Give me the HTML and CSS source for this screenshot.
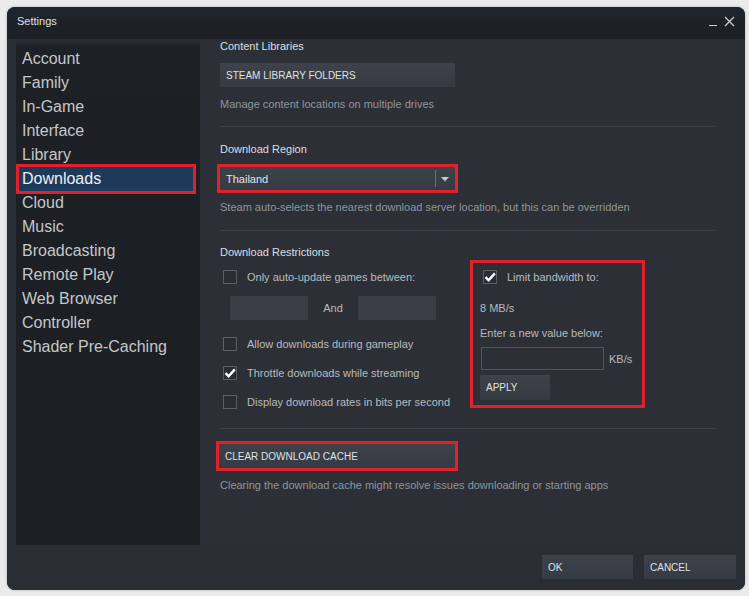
FILE: index.html
```html
<!DOCTYPE html>
<html>
<head>
<meta charset="utf-8">
<link rel="stylesheet" href="styles.css">
</head>
<body>
<div class="window">
  <div class="titlebar">
    <span class="title">Settings</span>
    <div class="controls">
      <span class="min"></span>
      <svg class="close" width="11" height="11" viewBox="0 0 11 11"><path d="M1 1L10 10M10 1L1 10" stroke="#c9ccd0" stroke-width="1.3"/></svg>
    </div>
  </div>
  <div class="main">
    <nav class="sidebar">
      <div class="item">Account</div>
      <div class="item">Family</div>
      <div class="item">In-Game</div>
      <div class="item">Interface</div>
      <div class="item">Library</div>
      <div class="item active">Downloads</div>
      <div class="item">Cloud</div>
      <div class="item">Music</div>
      <div class="item">Broadcasting</div>
      <div class="item">Remote Play</div>
      <div class="item">Web Browser</div>
      <div class="item">Controller</div>
      <div class="item">Shader Pre-Caching</div>
    </nav>
    <section class="content">
      <div class="heading">Content Libraries</div>
      <div class="btn wide mt10">STEAM LIBRARY FOLDERS</div>
      <div class="desc mt10">Manage content locations on multiple drives</div>
      <div class="sep sep1"></div>

      <div class="heading">Download Region</div>
      <div class="dropdown">
        <span class="dd-text">Thailand</span>
        <span class="dd-div"></span>
        <svg class="dd-arrow" width="8" height="5" viewBox="0 0 8 5"><path d="M0 0H8L4 4.5Z" fill="#c3c6ca"/></svg>
      </div>
      <div class="desc mt10">Steam auto-selects the nearest download server location, but this can be overridden</div>
      <div class="sep sep2"></div>

      <div class="heading h3">Download Restrictions</div>
      <div class="restrict">
        <div class="left">
          <div class="check-row r1"><span class="cb"></span><span class="label">Only auto-update games between:</span></div>
          <div class="times">
            <span class="tbox"></span>
            <span class="and">And</span>
            <span class="tbox"></span>
          </div>
          <div class="check-row r2"><span class="cb"></span><span class="label">Allow downloads during gameplay</span></div>
          <div class="check-row r3"><span class="cb"><svg width="14" height="14" viewBox="0 0 14 14"><path d="M2.5 7.2L5.6 10.2L11.8 3.4" fill="none" stroke="#fff" stroke-width="2.4"/></svg></span><span class="label">Throttle downloads while streaming</span></div>
          <div class="check-row r3"><span class="cb"></span><span class="label">Display download rates in bits per second</span></div>
        </div>
        <div class="bandwidth">
          <div class="check-row bw1"><span class="cb"><svg width="14" height="14" viewBox="0 0 14 14"><path d="M2.5 7.2L5.6 10.2L11.8 3.4" fill="none" stroke="#fff" stroke-width="2.4"/></svg></span><span class="label">Limit bandwidth to:</span></div>
          <div class="plain bw2">8 MB/s</div>
          <div class="plain bw3">Enter a new value below:</div>
          <div class="kb-row">
            <span class="kb-input"></span>
            <span class="plain">KB/s</span>
          </div>
          <div class="btn apply">APPLY</div>
        </div>
      </div>
      <div class="sep sep3"></div>
      <div class="btn wide clear">CLEAR DOWNLOAD CACHE</div>
      <div class="desc mt10">Clearing the download cache might resolve issues downloading or starting apps</div>
    </section>
  </div>
  <div class="footer">
    <div class="btn fbtn">OK</div>
    <div class="btn fbtn cancel">CANCEL</div>
  </div>
</div>
</body>
</html>
```

FILE: styles.css
```css
* { box-sizing: border-box; }
html, body { margin: 0; padding: 0; }
body {
  background: #ebebeb;
  width: 749px;
  height: 596px;
  overflow: hidden;
  font-family: "Liberation Sans", Arial, sans-serif;
  padding: 7px 0 0 7px;
}
.window {
  width: 738px;
  height: 583px;
  background: #2a2d33;
  border-radius: 8px;
  overflow: hidden;
  display: flex;
  flex-direction: column;
  box-shadow: 0 0 3px rgba(0,0,0,0.25);
}
.titlebar {
  height: 32px;
  flex: none;
  background: linear-gradient(#20252c, #1c1f24);
  display: flex;
  align-items: center;
  justify-content: space-between;
  padding: 0 10px 0 10px;
}
.title {
  color: #dfe2e5;
  font-size: 11px;
  margin-top: -4px;
}
.controls {
  display: flex;
  align-items: center;
  gap: 7px;
  margin-top: -4px;
}
.min {
  width: 8px;
  height: 1px;
  background: #c9ccd0;
  margin-top: 9px;
}
.main {
  height: 506px;
  flex: none;
  display: flex;
  padding-left: 9px;
}
.sidebar {
  width: 184px;
  flex: none;
  background: linear-gradient(#2c3037 0px, #1d2024 8px, #1c1e22 100%);
  padding-top: 8px;
}
.item {
  height: 24px;
  line-height: 24px;
  font-size: 16px;
  color: #c4c7cb;
  padding-left: 6px;
  width: 177px;
}
.item.active {
  position: relative;
  background: #1d3a5a;
  color: #eef1f4;
}
.item.active::after {
  content: "";
  position: absolute;
  left: 0;
  top: -3px;
  right: -3px;
  bottom: -3px;
  border: 3px solid #e0202b;
}
.content {
  width: 537px;
  flex: none;
  background: #2c2f36;
  padding: 0 22px 0 20px;
}
.heading {
  font-size: 11px;
  line-height: 14px;
  color: #dcdfe2;
}
.mt10 { margin-top: 10px; }
.desc {
  font-size: 11px;
  line-height: 14px;
  color: #8e959c;
  white-space: nowrap;
}
.sep {
  height: 1px;
  background: #3c4048;
}
.sep1 { margin: 15px 0 15px; }
.sep2 { margin: 16px 0 14px; }
.sep3 { margin: 19px 0 15px; }
.btn {
  background: linear-gradient(#3d424b, #363a42);
  color: #dfe2e5;
  font-size: 10px;
  padding-left: 6px;
  display: flex;
  align-items: center;
}
.wide {
  width: 235px;
  height: 24px;
}
.dropdown {
  margin-top: 11px;
  width: 235px;
  height: 23px;
  background: linear-gradient(#3d424b, #363a42);
  outline: 3px solid #e0202b;
  display: flex;
  align-items: center;
  padding-left: 6px;
}
.dd-text {
  flex: 1;
  font-size: 11px;
  color: #e3e6e9;
}
.dd-div {
  width: 1px;
  height: 17px;
  background: #6b7078;
}
.dd-arrow {
  margin: 1px 6px 0 5px;
}
.restrict {
  display: flex;
  margin-top: 1px;
}
.left {
  width: 250px;
  padding-top: 10px;
}
.check-row {
  display: flex;
  align-items: center;
  height: 14px;
}
.cb {
  width: 14px;
  height: 14px;
  border: 1px solid #5a5e65;
  background: #2a2d33;
  margin-left: 3px;
  margin-right: 10px;
  display: flex;
  align-items: center;
  justify-content: center;
  flex: none;
}
.cb svg { display: block; margin: -1px; }
.label, .plain {
  font-size: 11px;
  color: #b7bbbf;
  white-space: nowrap;
}
.times {
  display: flex;
  align-items: center;
  margin-top: 12px;
  padding-left: 10px;
  height: 24px;
}
.tbox {
  width: 78px;
  height: 24px;
  background: #3a3e46;
}
.and {
  width: 50px;
  text-align: center;
  font-size: 11px;
  color: #b7bbbf;
}
.r2 { margin-top: 17px; }
.r3 { margin-top: 15px; }
.bandwidth {
  margin-left: 0;
  width: 175px;
  height: 148px;
  border: 3px solid #e0202b;
  padding: 7px 0 0 7px;
}
.bw1 { margin-top: 0; }
.plain { display: block; line-height: 14px; }
.bw2 { margin-top: 17px; }
.bw3 { margin-top: 11px; }
.kb-row {
  display: flex;
  align-items: center;
  margin-top: 7px;
  gap: 5px;
}
.kb-input {
  width: 123px;
  height: 23px;
  margin-left: 1px;
  border: 1px solid #50555d;
  background: #2c2f36;
}
.apply {
  margin-top: 5px;
  width: 70px;
  height: 25px;
}
.clear {
  margin-left: -1px;
  width: 236px;
  outline: 3px solid #e0202b;
}
.footer {
  flex: 1;
  background: #2a2d33;
  display: flex;
  justify-content: flex-end;
  gap: 11px;
  padding: 10px 9px 0 0;
}
.fbtn {
  width: 91px;
  height: 24px;
}
.cancel { width: 92px; }
```
